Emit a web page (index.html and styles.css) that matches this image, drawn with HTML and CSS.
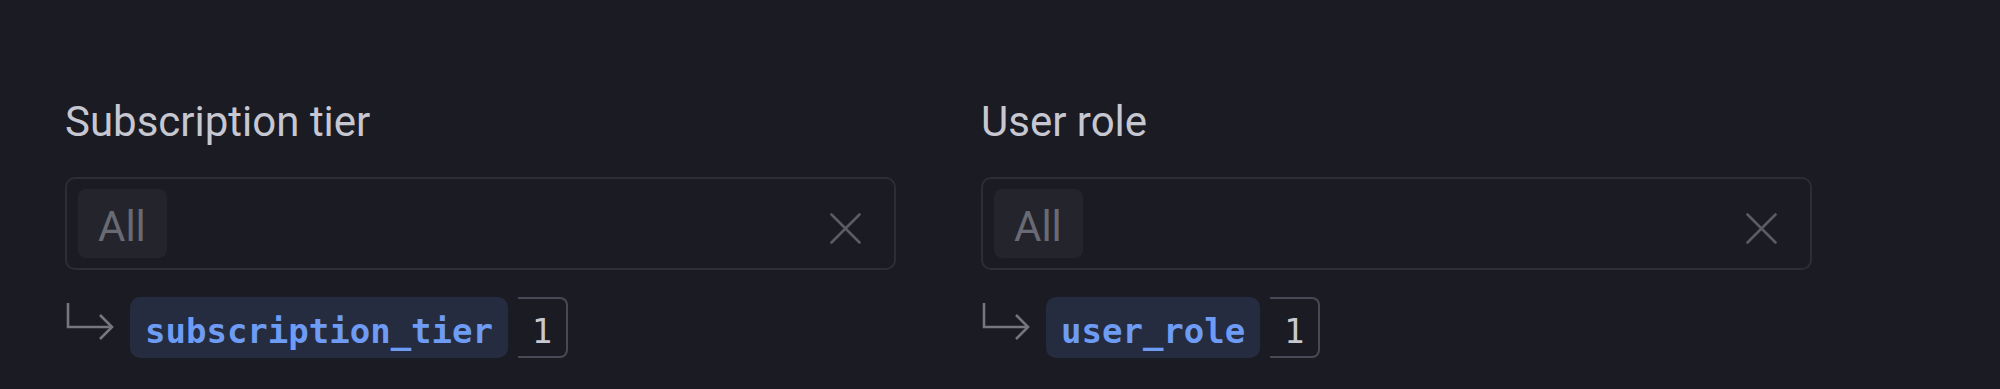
FILE: index.html
```html
<!DOCTYPE html>
<html lang="en">
<head>
<meta charset="utf-8">
<title>Filters</title>
<link rel="stylesheet" href="styles.css">
</head>
<body>
<div class="filters">
  <div class="filter">
    <div class="filter-label">Subscription tier</div>
    <div class="select">
      <span class="chip">All</span>
      <svg class="clear" viewBox="0 0 31 31" width="31" height="31" aria-hidden="true"><path d="M1.5 1.5 L29.5 29.5 M29.5 1.5 L1.5 29.5"/></svg>
    </div>
    <div class="mapping">
      <svg class="arrow" viewBox="0 0 48 38" width="48" height="38" aria-hidden="true"><path d="M2 0 V24 H46"/><path d="M34 12 L46 24 L34 36"/></svg>
      <code class="field">subscription_tier</code>
      <span class="count">1</span>
    </div>
  </div>
  <div class="filter">
    <div class="filter-label">User role</div>
    <div class="select">
      <span class="chip">All</span>
      <svg class="clear" viewBox="0 0 31 31" width="31" height="31" aria-hidden="true"><path d="M1.5 1.5 L29.5 29.5 M29.5 1.5 L1.5 29.5"/></svg>
    </div>
    <div class="mapping">
      <svg class="arrow" viewBox="0 0 48 38" width="48" height="38" aria-hidden="true"><path d="M2 0 V24 H46"/><path d="M34 12 L46 24 L34 36"/></svg>
      <code class="field">user_role</code>
      <span class="count">1</span>
    </div>
  </div>
</div>
</body>
</html>
```

FILE: styles.css
```css
html, body {
  margin: 0;
  padding: 0;
  background: #1b1b23;
  height: 389px;
  overflow: hidden;
}

.filters {
  display: flex;
  gap: 85px;
  padding: 101px 0 0 65px;
  font-family: Roboto, "Noto Sans", sans-serif;
}

.filter {
  width: 831px;
  display: flex;
  flex-direction: column;
}

.filter-label {
  font-size: 42px;
  line-height: 42px;
  color: #c6c7d0;
  font-weight: 400;
}

.select {
  margin-top: 34px;
  box-sizing: border-box;
  height: 93px;
  border: 2px solid #2d2d38;
  border-radius: 10px;
  padding: 10px 11px;
  display: flex;
  align-items: center;
}

.chip {
  box-sizing: border-box;
  height: 69px;
  width: 89px;
  padding: 6px 20px 0;
  display: flex;
  align-items: center;
  background: #24242d;
  border-radius: 8px;
  font-size: 42px;
  color: #6a6a74;
}

.clear {
  margin-left: auto;
  margin-right: 22px;
  margin-top: 10px;
  fill: none;
  stroke: #5b5b65;
  stroke-width: 2.6;
  stroke-linecap: round;
}

.mapping {
  margin-top: 27px;
  display: flex;
  align-items: flex-start;
}

.arrow {
  margin-left: 1px;
  margin-top: 6px;
  margin-right: 16px;
  fill: none;
  stroke: #76767e;
  stroke-width: 2.6;
  stroke-linejoin: miter;
}

.field {
  box-sizing: border-box;
  height: 61px;
  padding: 7px 15px 0;
  display: flex;
  align-items: center;
  background: #252c40;
  border-radius: 10px;
  font-family: "DejaVu Sans Mono", "Liberation Mono", monospace;
  font-size: 34px;
  font-weight: 700;
  color: #6e9cf4;
}

.count {
  box-sizing: border-box;
  margin-left: 10px;
  width: 50px;
  height: 61px;
  padding-top: 7px;
  display: flex;
  align-items: center;
  justify-content: center;
  border: 2px solid #4a4856;
  border-left: none;
  border-radius: 0 8px 8px 0;
  font-family: "DejaVu Sans Mono", "Liberation Mono", monospace;
  font-size: 34px;
  color: #c8c9cf;
}
```
